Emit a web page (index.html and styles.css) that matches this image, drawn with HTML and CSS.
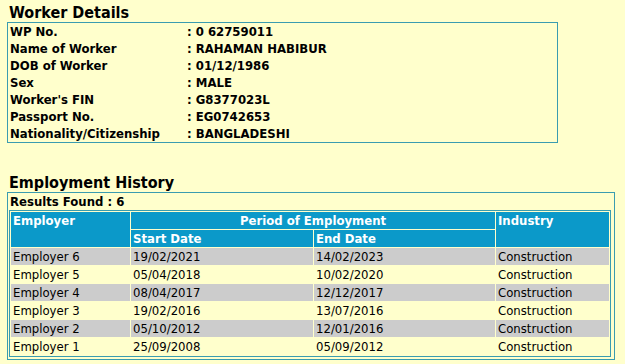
FILE: index.html
```html
<!DOCTYPE html>
<html>
<head>
<meta charset="utf-8">
<link rel="stylesheet" href="styles.css">
</head>
<body>
<div class="page">
  <h2 class="title">Worker Details</h2>
  <div class="box details">
    <div class="lbl">WP No.</div><div class="val">: 0 62759011</div>
    <div class="lbl">Name of Worker</div><div class="val">: RAHAMAN HABIBUR</div>
    <div class="lbl">DOB of Worker</div><div class="val">: 01/12/1986</div>
    <div class="lbl">Sex</div><div class="val">: MALE</div>
    <div class="lbl">Worker's FIN</div><div class="val">: G8377023L</div>
    <div class="lbl">Passport No.</div><div class="val">: EG0742653</div>
    <div class="lbl">Nationality/Citizenship</div><div class="val">: BANGLADESHI</div>
  </div>

  <h2 class="title hist">Employment History</h2>
  <div class="box history">
    <div class="results">Results Found : 6</div>
    <table class="emp">
      <colgroup>
        <col class="c1"><col class="c2"><col class="c3"><col class="c4">
      </colgroup>
      <thead>
        <tr>
          <th rowspan="2">Employer</th>
          <th colspan="2" class="center">Period of Employment</th>
          <th rowspan="2">Industry</th>
        </tr>
        <tr>
          <th>Start Date</th>
          <th>End Date</th>
        </tr>
      </thead>
      <tbody>
        <tr class="alt"><td>Employer 6</td><td>19/02/2021</td><td>14/02/2023</td><td>Construction</td></tr>
        <tr><td>Employer 5</td><td>05/04/2018</td><td>10/02/2020</td><td>Construction</td></tr>
        <tr class="alt"><td>Employer 4</td><td>08/04/2017</td><td>12/12/2017</td><td>Construction</td></tr>
        <tr><td>Employer 3</td><td>19/02/2016</td><td>13/07/2016</td><td>Construction</td></tr>
        <tr class="alt"><td>Employer 2</td><td>05/10/2012</td><td>12/01/2016</td><td>Construction</td></tr>
        <tr><td>Employer 1</td><td>25/09/2008</td><td>05/09/2012</td><td>Construction</td></tr>
      </tbody>
    </table>
  </div>
</div>
</body>
</html>
```

FILE: styles.css
```css
html, body {
  margin: 0;
  padding: 0;
  background: #ffffcc;
}
body {
  font-family: "DejaVu Sans Condensed", "DejaVu Sans", Verdana, sans-serif;
  font-size: 13px;
  color: #000;
}
.page {
  padding: 4px 7px 0 7px;
}
.title {
  margin: 0 0 0 2px;
  font-size: 16px;
  font-weight: bold;
  line-height: 18px;
}
.title.hist {
  margin-top: 31px;
}
.box {
  border: 1px solid #3a9cb0;
}
.details {
  width: 547px;
  display: grid;
  grid-template-columns: 177px auto;
  padding: 0 0 0 2px;
  font-weight: bold;
  line-height: 17px;
}
.history {
  width: 605px;
  padding: 0 0 2px 1px;
}
.results {
  font-weight: bold;
  line-height: 17px;
  padding-left: 1px;
}
.emp {
  width: 602px;
  border: 1px solid #3a9cb0;
  border-spacing: 1px;
  background: #ffffcc;
  table-layout: fixed;
}
.c1 { width: 119px; }
.c2 { width: 182px; }
.c3 { width: 181px; }
.c4 { width: 113px; }
.emp th, .emp td {
  padding: 0 2px;
  height: 17px;
  line-height: 17px;
  text-align: left;
  white-space: nowrap;
}
.emp th {
  background: #0b99c9;
  color: #fff;
  font-weight: bold;
  vertical-align: top;
}
.emp th.center {
  text-align: center;
}
.emp td {
  background: #ffffcc;
}
.emp tr.alt td {
  background: #cccccc;
}
```
